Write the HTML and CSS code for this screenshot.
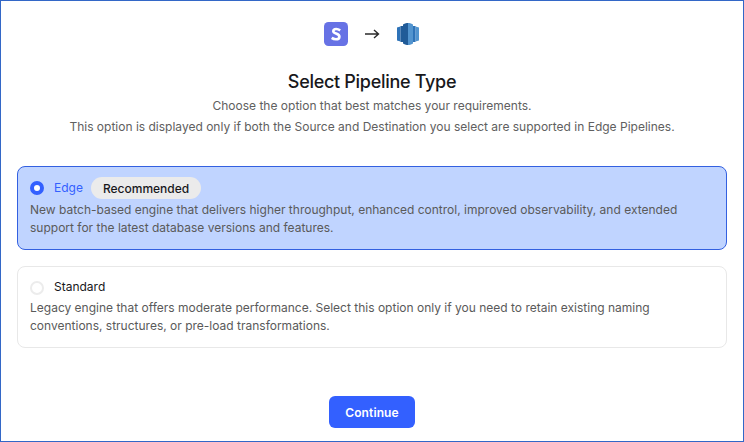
FILE: index.html
```html
<!DOCTYPE html>
<html lang="en">
<head>
<meta charset="utf-8">
<title>Select Pipeline Type</title>
<link rel="stylesheet" href="styles.css">
</head>
<body>
<main class="frame">
  <div class="logos">
    <svg class="logo" width="24" height="24" viewBox="0 0 24 24">
      <rect width="24" height="24" rx="4.500" fill="#6772e5"/>
      <path d="M16.200 8.300C15 7.500 13.600 7 12.200 7c-1.700 0-2.900.8-2.900 2.200 0 2.800 6.100 1.800 6.100 5.500 0 1.600-1.400 2.600-3.500 2.600-1.500 0-3-.5-4.200-1.400" fill="none" stroke="#fff" stroke-width="2.600"/>
    </svg>
    <svg class="arrow" width="16" height="12" viewBox="0 0 16 12">
      <path d="M1 6h13.500M10 2l4.500 4-4.500 4" fill="none" stroke="#2a2a2a" stroke-width="1.400"/>
    </svg>
    <svg class="logo" width="24" height="24" viewBox="0 0 24 24">
      <path d="M1 5.500 4.500 4.500v15l-3.500-1z" fill="#2e73b8"/>
      <path d="M23 5.500 19.500 4.500v15l3.500-1z" fill="#5294cf"/>
      <path d="M4.500 4h3.500v16h-3.500z" fill="#205b98"/>
      <path d="M16 4h3.500v16h-3.500z" fill="#2e73b8"/>
      <path d="M7 2.500C9 1.200 10.800 1 12 1v22c-1.200 0-3-.2-5-1.500z" fill="#205b98"/>
      <path d="M17 2.500C15 1.200 13.200 1 12 1v22c1.200 0 3-.2 5-1.500z" fill="#5294cf"/>
    </svg>
  </div>
  <h1 class="title">Select Pipeline Type</h1>
  <p class="subtitle">Choose the option that best matches your requirements.</p>
  <p class="subtitle">This option is displayed only if both the Source and Destination you select are supported in Edge Pipelines.</p>
  <div class="options">
    <div class="card card-active">
      <div class="card-head">
        <span class="radio radio-on"></span>
        <span class="name name-active">Edge</span>
        <span class="badge">Recommended</span>
      </div>
      <p class="desc">New batch-based engine that delivers higher throughput, enhanced control, improved observability, and extended support for the latest database versions and features.</p>
    </div>
    <div class="card card-plain">
      <div class="card-head">
        <span class="radio"></span>
        <span class="name">Standard</span>
      </div>
      <p class="desc">Legacy engine that offers moderate performance. Select this option only if you need to retain existing naming conventions, structures, or pre-load transformations.</p>
    </div>
  </div>
  <button class="continue" type="button">Continue</button>
</main>
</body>
</html>
```
FILE: styles.css
```css
* { box-sizing: border-box; }
html, body { margin: 0; height: 100%; }
body { font-family: Inter, "Liberation Sans", sans-serif; background: #fff; color: #18181b; overflow: hidden; -webkit-font-smoothing: antialiased; }
.frame {
  width: 744px; height: 442px;
  border: 1px solid #3367c7;
  padding: 21px 16px 13px;
  display: flex; flex-direction: column; align-items: center;
}
.logos { display: flex; align-items: center; height: 24px; gap: 16px; }
.logo, .arrow { display: block; }
.title { margin: 24px 0 1px; font-size: 18px; line-height: 24px; font-weight: 500; letter-spacing: -0.3px; color: #18181b; }
.subtitle { margin: 0; font-size: 12px; line-height: 21px; color: #606060; }
.options { width: 100%; margin-top: 29px; display: flex; flex-direction: column; gap: 16px; }
.card {
  width: 100%;
  border: 1px solid #e8e8e8; border-radius: 8px;
  background: #fff;
  padding: 10px 12px 12px;
}
.card-active { background: #c0d4ff; border-color: #3360e0; }
.card-plain { padding-top: 10px; padding-bottom: 12px; }
.card-plain .card-head { height: 20px; }
.card-plain .radio { position: relative; top: 1px; }
.card-head { display: flex; align-items: center; min-height: 20px; }
.radio { width: 14px; height: 14px; border-radius: 50%; border: 2px solid #ececec; background: #fff; flex: none; margin-right: 10px; }
.radio-on { border: 4px solid #3360ff; }
.name { font-size: 12px; line-height: 20px; color: #18181b; }
.name-active { color: #3360ff; }
.badge {
  margin-left: 8px; height: 22px; padding: 0 12px;
  display: inline-flex; align-items: center;
  font-size: 12px; font-weight: 450; color: #18181b;
  background: #ebebeb; border-radius: 11px;
}
.desc { margin: 2px 0 0; font-size: 12px; line-height: 18px; color: #5a5a5a; }
.continue {
  margin-top: auto;
  width: 86px; height: 32px;
  border: 0; border-radius: 6px;
  background: #3360ff; color: #fff;
  font: 600 12px Inter, "Liberation Sans", sans-serif;
  letter-spacing: 0.1px;
}
```
